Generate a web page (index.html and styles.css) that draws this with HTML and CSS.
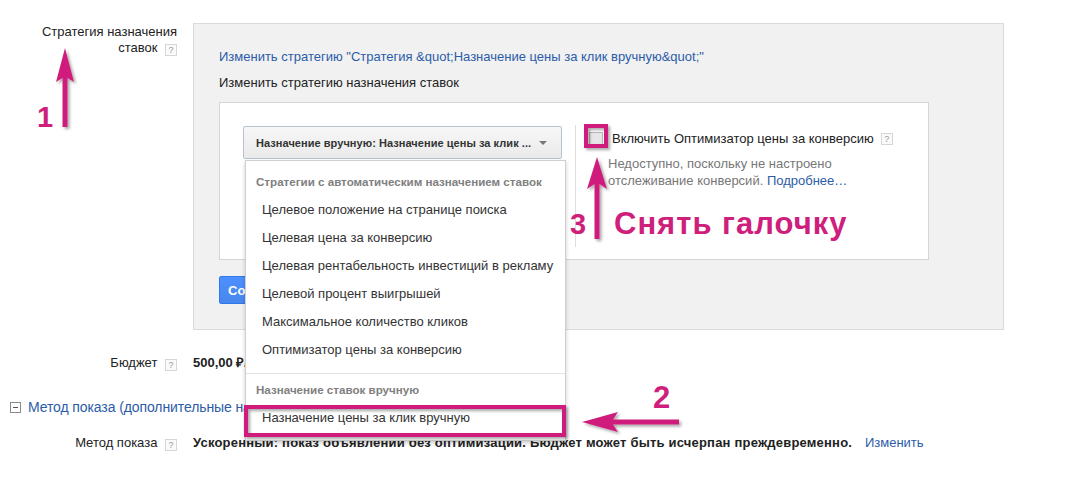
FILE: index.html
```html
<!DOCTYPE html>
<html lang="ru">
<head>
<meta charset="utf-8">
<title>Стратегия назначения ставок</title>
<link rel="stylesheet" href="styles.css">
</head>
<body>
<div class="page">
  <div class="row row-strategy">
    <div class="label">Стратегия назначения<br>ставок <span class="help">?</span></div>
    <div class="panel">
      <a class="link" href="#">Изменить стратегию "Стратегия &amp;quot;Назначение цены за клик вручную&amp;quot;"</a>
      <div class="subtitle">Изменить стратегию назначения ставок</div>
      <div class="inner">
        <div class="select">
          <span class="select-text">Назначение вручную: Назначение цены за клик ...</span>
          <span class="caret"></span>
          <div class="menu">
            <div class="menu-head">Стратегии с автоматическим назначением ставок</div>
            <div class="menu-item">Целевое положение на странице поиска</div>
            <div class="menu-item">Целевая цена за конверсию</div>
            <div class="menu-item">Целевая рентабельность инвестиций в рекламу</div>
            <div class="menu-item">Целевой процент выигрышей</div>
            <div class="menu-item">Максимальное количество кликов</div>
            <div class="menu-item">Оптимизатор цены за конверсию</div>
            <div class="menu-sep"></div>
            <div class="menu-head">Назначение ставок вручную</div>
            <div class="menu-item">Назначение цены за клик вручную</div>
          </div>
        </div>
        <div class="opt">
          <div class="check"><span class="box"></span><span>Включить Оптимизатор цены за конверсию</span> <span class="help">?</span></div>
          <div class="note">Недоступно, поскольку не настроено<br>отслеживание конверсий. <a class="link" href="#">Подробнее…</a></div>
        </div>
      </div>
      <button class="save">Сохранить</button>
    </div>
  </div>

  <div class="row row-budget">
    <div class="label">Бюджет <span class="help">?</span></div>
    <div class="value">500,00 ₽/день</div>
  </div>

  <div class="section">
    <span class="toggle"></span><a class="section-link" href="#">Метод показа (дополнительные настройки)</a>
  </div>

  <div class="row row-method">
    <div class="label">Метод показа <span class="help">?</span></div>
    <div class="value value-wide">Ускоренный: показ объявлений без оптимизации. Бюджет может быть исчерпан преждевременно. <a class="link change" href="#">Изменить</a></div>
  </div>
</div>

<svg class="notes" width="1072" height="485" viewBox="0 0 1072 485" xmlns="http://www.w3.org/2000/svg">
  <defs>
    <filter id="sh" x="-20%" y="-20%" width="140%" height="140%">
      <feDropShadow dx="2" dy="2" stdDeviation="1.6" flood-color="#000" flood-opacity="0.35"/>
    </filter>
  </defs>
  <g fill="#cf1f7c" filter="url(#sh)">
    <path d="M65 48 L74 82 L67.5 78 L67.5 127 L62.5 127 L62.5 78 L56 82 Z"/>
    <path d="M597 157 L607 189 L599.5 184 L599.5 239 L594.5 239 L594.5 184 L587 189 Z"/>
    <path d="M582 422 L618 412 L613 419.5 L679 419.5 L679 424.5 L613 424.5 L618 432 Z"/>
  </g>
  <g fill="none" stroke="#cf1f7c" stroke-width="4" filter="url(#sh)">
    <rect x="586" y="126" width="20" height="20"/>
    <rect x="246" y="407" width="318" height="28"/>
  </g>
  <g fill="#cf1f7c" font-family="'Liberation Sans', Arial, sans-serif" font-weight="bold">
    <text x="37" y="127" font-size="29">1</text>
    <text x="653" y="408" font-size="31">2</text>
    <text x="570" y="234" font-size="29">3</text>
    <text x="614" y="234" font-size="31" letter-spacing="1">Снять галочку</text>
  </g>
</svg>
</body>
</html>
```
FILE: styles.css
```css
html, body {
  margin: 0;
  padding: 0;
  background: #fff;
}
body {
  font-family: "Liberation Sans", Arial, sans-serif;
  font-size: 13px;
  color: #222;
  position: relative;
  width: 1072px;
  height: 485px;
  overflow: hidden;
}
.page {
  padding-top: 24px;
}
.row {
  display: grid;
  grid-template-columns: 177px 811px;
  column-gap: 16px;
  line-height: 16px;
}
.label {
  text-align: right;
  color: #222;
}
.help {
  display: inline-block;
  box-sizing: border-box;
  width: 12px;
  height: 12px;
  border: 1px solid #d6d6d6;
  background: #fafafa;
  color: #999;
  font-size: 9px;
  line-height: 10px;
  text-align: center;
  vertical-align: -1px;
  margin-left: 4px;
  font-weight: normal;
}
.link {
  color: #2c5ca8;
  text-decoration: none;
}
.panel {
  box-sizing: border-box;
  width: 811px;
  margin-top: -1px;
  background: #f1f1f1;
  border: 1px solid #dadada;
  padding: 25px 0 25px 25px;
}
.panel > .link {
  display: block;
}
.subtitle {
  margin-top: 10px;
  color: #222;
}
.inner {
  box-sizing: border-box;
  width: 710px;
  height: 158px;
  margin-top: 11px;
  background: #fff;
  border: 1px solid #d6d6d6;
  padding: 23px 0 0 23px;
  display: flex;
  align-items: flex-start;
}
.select {
  position: relative;
  box-sizing: border-box;
  width: 319px;
  height: 33px;
  border: 1px solid #b7c2d0;
  border-radius: 2px;
  background: linear-gradient(#f7f7f7, #eaeaea);
  display: flex;
  align-items: center;
  padding-left: 12px;
  font-size: 11px;
  font-weight: bold;
  color: #333;
}
.select-text {
  flex: 1;
  letter-spacing: 0.05px;
}
.caret {
  width: 0;
  height: 0;
  border-left: 4px solid transparent;
  border-right: 4px solid transparent;
  border-top: 4px solid #777;
  margin-right: 14px;
}
.menu {
  position: absolute;
  top: 33px;
  left: 1px;
  box-sizing: border-box;
  width: 321px;
  background: #fff;
  border: 1px solid #cfcfcf;
  box-shadow: 0 2px 4px rgba(0, 0, 0, 0.2);
  padding: 7px 0 8px;
  font-weight: normal;
  z-index: 2;
}
.menu-head {
  height: 28px;
  line-height: 28px;
  padding-left: 10px;
  font-size: 11.6px;
  font-weight: bold;
  color: #808080;
}
.menu-item {
  height: 28px;
  line-height: 28px;
  padding-left: 16px;
  font-size: 13px;
  color: #333;
}
.menu-sep {
  height: 1px;
  background: #e3e3e3;
  margin: 9px 0 2px;
}
.opt {
  box-sizing: border-box;
  margin-left: 13px;
  margin-top: -1px;
  height: 122px;
  border-left: 1px solid #dedede;
  padding: 6px 0 0 13px;
}
.check {
  display: flex;
  align-items: center;
  line-height: 16px;
  color: #222;
}
.box {
  box-sizing: border-box;
  width: 14px;
  height: 14px;
  border: 1px solid #b5b5b5;
  background: #e6e6e6;
  margin-right: 9px;
}
.check .help {
  margin-left: 7px;
}
.note {
  margin-top: 8px;
  padding-left: 19px;
  line-height: 17px;
  color: #777;
}
.save {
  display: block;
  margin-top: 16px;
  height: 28px;
  padding: 0 8px;
  border: 1px solid #3079ed;
  border-radius: 2px;
  background: linear-gradient(#4d90fe, #4787ed);
  color: #fff;
  font-family: "Liberation Sans", Arial, sans-serif;
  font-size: 13px;
  font-weight: bold;
}
.row-budget {
  margin-top: 25px;
}
.value {
  font-weight: bold;
  color: #222;
}
.value-wide {
  letter-spacing: 0.2px;
}
.section {
  margin-top: 27px;
  padding-left: 10px;
  display: flex;
  align-items: center;
  height: 18px;
  font-size: 14px;
}
.toggle {
  position: relative;
  box-sizing: border-box;
  width: 11px;
  height: 11px;
  border: 1px solid #8a8a8a;
  background: #fff;
  margin-right: 7px;
}
.toggle::after {
  content: "";
  position: absolute;
  left: 2px;
  right: 2px;
  top: 4px;
  height: 1px;
  background: #555;
}
.section-link {
  color: #2c5ca8;
  text-decoration: none;
  letter-spacing: -0.1px;
}
.row-method {
  margin-top: 19px;
}
.change {
  font-weight: normal;
  letter-spacing: 0;
  margin-left: 9px;
}
.notes {
  position: absolute;
  left: 0;
  top: 0;
  pointer-events: none;
  z-index: 5;
}
```
